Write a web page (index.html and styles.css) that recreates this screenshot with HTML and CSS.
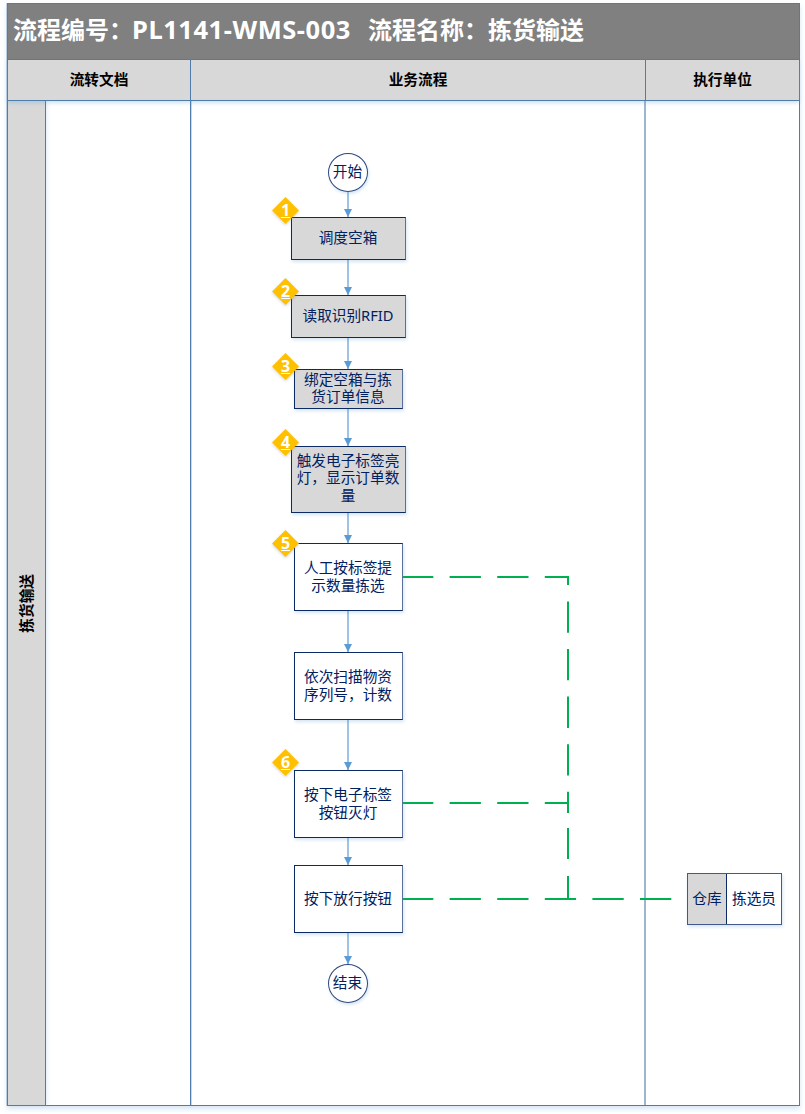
FILE: index.html
```html
<!DOCTYPE html>
<html lang="zh-CN">
<head>
<meta charset="utf-8">
<title>流程编号 PL1141-WMS-003 流程名称 拣货输送</title>
<link rel="stylesheet" href="styles.css">
</head>
<body>
<main class="sheet">
  <h1 class="title">流程编号&#xFF1A;<span class="title-code">PL1141-WMS-003</span><span class="title-gap"></span>流程名称&#xFF1A;拣货输送</h1>
  <div class="head">
    <div class="head-cell">流转文档</div>
    <div class="head-cell">业务流程</div>
    <div class="head-cell head-last">执行单位</div>
  </div>
  <div class="lanes">
    <div class="lane"><span class="lane-label">拣货输送</span></div>
    <div class="col col-docs"></div>
    <div class="col col-flow"></div>
    <div class="col col-unit"></div>

    <div class="canvas">
      <svg class="wires" width="791" height="1004" viewBox="8 101 791 1004" aria-hidden="true">
        <defs>
          <marker id="tip" markerUnits="userSpaceOnUse" markerWidth="9" markerHeight="9" refX="8" refY="4.5" orient="auto">
            <path class="tip-shape" d="M0 0.5L8 4.5L0 8.5Z"/>
          </marker>
        </defs>
        <g class="flow-lines">
          <path d="M348 192V217" marker-end="url(#tip)"/>
          <path d="M348 260V295" marker-end="url(#tip)"/>
          <path d="M348 338V369" marker-end="url(#tip)"/>
          <path d="M348 409V446" marker-end="url(#tip)"/>
          <path d="M348 513V543" marker-end="url(#tip)"/>
          <path d="M348 611V652" marker-end="url(#tip)"/>
          <path d="M348 720V770" marker-end="url(#tip)"/>
          <path d="M348 838V865" marker-end="url(#tip)"/>
          <path d="M348 933V964" marker-end="url(#tip)"/>
        </g>
        <g class="dash-lines">
          <path d="M402 577H568V813"/>
          <path d="M402 803H568"/>
          <path d="M402 899H672"/>
        </g>
        <g class="solid-lines">
          <path d="M568 828V859"/>
          <path d="M568 876V899"/>
        </g>
      </svg>

      <div class="node round n-start">开始</div>
      <div class="node gray n-1">调度空箱</div>
      <div class="node gray n-2">读取识别RFID</div>
      <div class="node gray n-3">绑定空箱与拣<br>货订单信息</div>
      <div class="node gray n-4">触发电子标签亮<br>灯&#xFF0C;显示订单数<br>量</div>
      <div class="node n-5">人工按标签提<br>示数量拣选</div>
      <div class="node n-6">依次扫描物资<br>序列号&#xFF0C;计数</div>
      <div class="node n-7">按下电子标签<br>按钮灭灯</div>
      <div class="node n-8">按下放行按钮</div>
      <div class="node round n-end">结束</div>

      <div class="step s-1">1</div>
      <div class="step s-2">2</div>
      <div class="step s-3">3</div>
      <div class="step s-4">4</div>
      <div class="step s-5">5</div>
      <div class="step s-6">6</div>

      <div class="actor">
        <div class="actor-dept">仓库</div>
        <div class="actor-role">拣选员</div>
      </div>
    </div>
  </div>
</main>
</body>
</html>
```

FILE: styles.css
```css
* {
  box-sizing: border-box;
}

html,
body {
  margin: 0;
  height: 100%;
  background: #fff;
  overflow: hidden;
}

body {
  font-family: "Noto Sans", "Noto Sans CJK SC", sans-serif;
}

.sheet {
  display: flex;
  flex-direction: column;
  width: 793px;
  height: 1103px;
  margin: 3px 0 0 7px;
  border: 1px solid #4f7cab;
  box-shadow: 0 3px 5px rgba(91, 155, 213, 0.25), -1px 0 0 rgba(79, 124, 171, 0.3);
}

.title {
  flex: 0 0 56px;
  margin: 0;
  padding-left: 5px;
  background: #808080;
  border-bottom: 1px solid #4f7cab;
  color: #fff;
  font-size: 24px;
  font-weight: 700;
  line-height: 50px;
  white-space: nowrap;
}

.title-code {
  margin-left: -1px;
  font-size: 25.5px;
  letter-spacing: 0.55px;
}

.title-gap {
  display: inline-block;
  width: 17px;
}

.head {
  flex: 0 0 41px;
  display: grid;
  grid-template-columns: 183px 455px 153px;
  background: #d8d8d8;
  border-bottom: 1px solid #4f7cab;
  box-shadow: 0 2px 4px rgba(91, 155, 213, 0.3);
  position: relative;
  z-index: 1;
}

.head-cell {
  display: flex;
  align-items: center;
  justify-content: center;
  padding-bottom: 3px;
  border-right: 1px solid #4f7cab;
  color: #000;
  font-size: 14.67px;
  font-weight: 700;
}

.head-last {
  border-right: 0;
}

.lanes {
  flex: 1;
  position: relative;
  display: grid;
  grid-template-columns: 38px 145px 455px 153px;
}

.lane {
  display: flex;
  align-items: center;
  justify-content: center;
  background: #d8d8d8;
  border-right: 1px solid #4f7cab;
  box-shadow: 2px 0 3px rgba(91, 155, 213, 0.15);
}

.lane-label {
  writing-mode: vertical-rl;
  text-orientation: sideways;
  transform: rotate(180deg);
  color: #000;
  font-size: 14.67px;
  font-weight: 700;
  line-height: 1;
}

.col-docs {
  border-right: 1px solid #4f7cab;
  box-shadow: 1px 0 0 rgba(79, 124, 171, 0.3);
}

.col-flow {
  border-right: 2px solid #9db5cf;
}

.canvas {
  position: absolute;
  inset: 0;
}

.wires {
  position: absolute;
  left: 0;
  top: 0;
  overflow: visible;
}

.tip-shape {
  fill: #5b9bd5;
}

.flow-lines path,
.dash-lines path,
.solid-lines path {
  fill: none;
  stroke-width: 2;
}

.flow-lines path {
  stroke: #9dc3e6;
}

.dash-lines path {
  stroke: #00b050;
  stroke-dasharray: 31.3 16.3;
}

.solid-lines path {
  stroke: #00b050;
}

.node {
  position: absolute;
  display: flex;
  align-items: center;
  justify-content: center;
  padding: 0 1px 3px 0;
  background: #fff;
  border: 1px solid #0c2a63;
  border-right-color: #5a6f9b;
  box-shadow: 1px 2px 3px rgba(91, 155, 213, 0.25);
  color: #002060;
  font-size: 14.67px;
  line-height: 18px;
  text-align: center;
  white-space: nowrap;
}

.gray {
  background: #d8d8d8;
}

.round {
  width: 40px;
  height: 39px;
  border-radius: 50%;
  border-color: #2f4a80;
}

.n-start { left: 320px; top: 52px; }
.n-end   { left: 320px; top: 863px; }
.n-1 { left: 283px; top: 116px; width: 115px; height: 43px; }
.n-2 { left: 283px; top: 194px; width: 115px; height: 43px; }
.n-3 { left: 286px; top: 268px; width: 109px; height: 40px; line-height: 17px; }
.n-4 { left: 283px; top: 345px; width: 115px; height: 67px; line-height: 17.5px; }
.n-5 { left: 286px; top: 442px; width: 109px; height: 68px; }
.n-6 { left: 286px; top: 551px; width: 109px; height: 68px; }
.n-7 { left: 286px; top: 669px; width: 109px; height: 68px; }
.n-8 { left: 286px; top: 764px; width: 109px; height: 68px; }

.step {
  position: absolute;
  width: 27px;
  height: 27px;
  display: flex;
  align-items: center;
  justify-content: center;
  padding-bottom: 2px;
  color: #fff;
  font-size: 16px;
  font-weight: 700;
  line-height: 20px;
  text-decoration: underline;
  text-underline-offset: 1px;
  z-index: 1;
}

.step::before {
  content: "";
  position: absolute;
  left: 4px;
  top: 4px;
  width: 19px;
  height: 19px;
  background: #ffc000;
  transform: rotate(45deg);
  box-shadow: 1px 1px 3px rgba(120, 120, 120, 0.3);
  z-index: -1;
}

.s-1 { left: 264px; top: 96px; }
.s-2 { left: 264px; top: 177px; }
.s-3 { left: 264px; top: 252px; }
.s-4 { left: 264px; top: 328px; }
.s-5 { left: 264px; top: 429px; }
.s-6 { left: 264px; top: 648px; }

.actor {
  position: absolute;
  left: 679px;
  top: 772px;
  width: 95px;
  height: 52px;
  display: grid;
  grid-template-columns: 39px 1fr;
  background: #fff;
  border: 1px solid #44598a;
  box-shadow: 1px 2px 3px rgba(91, 155, 213, 0.25);
  color: #002060;
  font-size: 14.67px;
}

.actor-dept,
.actor-role {
  display: flex;
  align-items: center;
  justify-content: center;
  padding-bottom: 3px;
}

.actor-dept {
  background: #d8d8d8;
  border-right: 1px solid #0c2a63;
}
```
